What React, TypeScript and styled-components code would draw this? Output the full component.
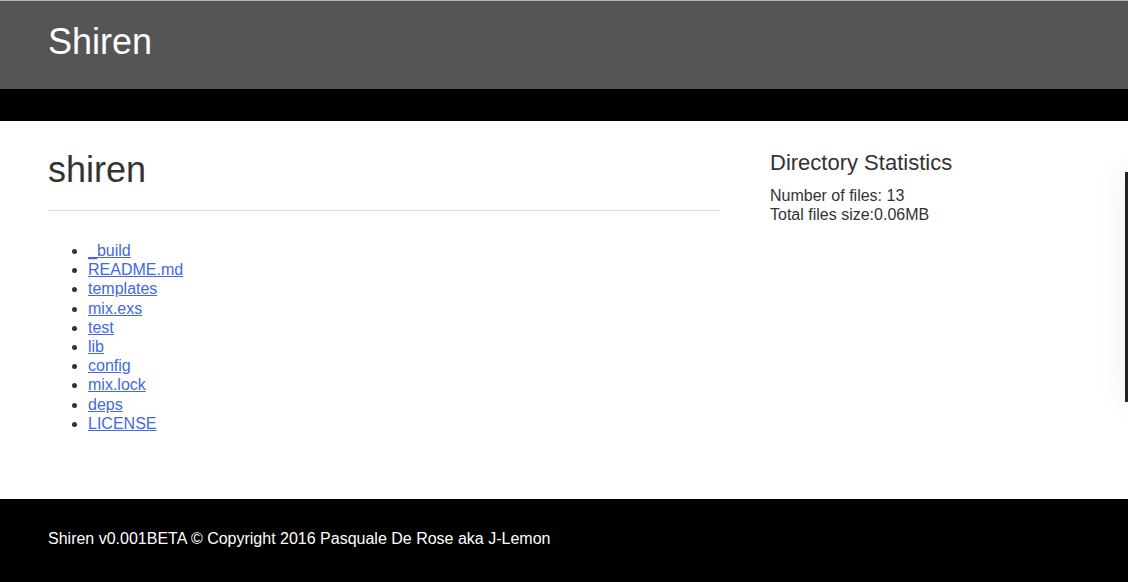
import React from "react";
import styled, { createGlobalStyle } from "styled-components";

const Global = createGlobalStyle`
  html, body { margin: 0; padding: 0; background: #fff; }
  body {
    font-family: "Liberation Sans", Arial, sans-serif;
    font-size: 16px;
    line-height: 1.2;
    color: #333;
    overflow: hidden;
  }
`;

const Header = styled.header`
  border-top: 1px solid #b5b5b5;
  background: #555555;
  height: 88px;
  padding: 0 48px;
  display: flex;
  align-items: center;
  box-sizing: content-box;
`;

const Brand = styled.div`
  color: #fff;
  font-size: 36px;
  line-height: 1;
  margin-top: -7px;
`;

const NavBar = styled.nav`
  background: #000;
  height: 32px;
`;

const Main = styled.main`
  height: 378px;
  box-sizing: border-box;
  padding: 29px 48px 0;
  display: grid;
  grid-template-columns: 671px 1fr;
  column-gap: 51px;
  align-items: start;
`;

const Title = styled.h1`
  margin: 0;
  font-size: 36px;
  font-weight: normal;
  line-height: 40px;
  color: #333;
`;

const Rule = styled.hr`
  border: 0;
  border-top: 1px solid #dcdcdc;
  margin: 20px 0 0;
`;

const FileList = styled.ul`
  margin: 30px 0 0;
  padding-left: 40px;
  list-style: disc;
`;

const Item = styled.li`
  line-height: 19.2px;
`;

const FileLink = styled.a`
  color: #4169e1;
  text-decoration: underline;
`;

const Side = styled.aside``;

const SideTitle = styled.h3`
  margin: 0;
  font-size: 22px;
  font-weight: normal;
  line-height: 26px;
  color: #333;
`;

const Stats = styled.div`
  margin-top: 10px;
  line-height: 19px;
`;

const Footer = styled.footer`
  background: #000;
  color: #fff;
  height: 83px;
  box-sizing: border-box;
  padding: 30px 48px 0;
  line-height: 19px;
`;

const Drawer = styled.div`
  position: fixed;
  top: 172px;
  right: -300px;
  width: 303px;
  height: 230px;
  background: #222;
  box-shadow: 0 0 30px rgba(0, 0, 0, 0.08);
`;

const files = [
  "_build",
  "README.md",
  "templates",
  "mix.exs",
  "test",
  "lib",
  "config",
  "mix.lock",
  "deps",
  "LICENSE",
];

export default function App() {
  return (
    <>
      <Global />
      <Header>
        <Brand>Shiren</Brand>
      </Header>
      <NavBar />
      <Main>
        <div>
          <Title>shiren</Title>
          <Rule />
          <FileList>
            {files.map((f) => (
              <Item key={f}>
                <FileLink href="#">{f}</FileLink>
              </Item>
            ))}
          </FileList>
        </div>
        <Side>
          <SideTitle>Directory Statistics</SideTitle>
          <Stats>
            Number of files: 13
            <br />
            Total files size:0.06MB
          </Stats>
        </Side>
      </Main>
      <Footer>Shiren v0.001BETA © Copyright 2016 Pasquale De Rose aka J-Lemon</Footer>
      <Drawer />
    </>
  );
}
